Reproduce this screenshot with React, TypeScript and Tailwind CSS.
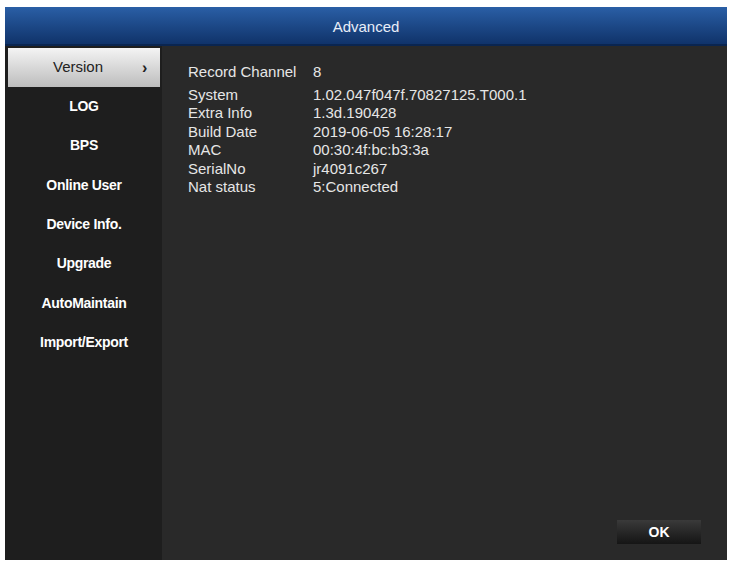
export default function App() {
  const menu = ["LOG", "BPS", "Online User", "Device Info.", "Upgrade", "AutoMaintain", "Import/Export"];
  const rows: [string, string][] = [
    ["System", "1.02.047f047f.70827125.T000.1"],
    ["Extra Info", "1.3d.190428"],
    ["Build Date", "2019-06-05 16:28:17"],
    ["MAC", "00:30:4f:bc:b3:3a"],
    ["SerialNo", "jr4091c267"],
    ["Nat status", "5:Connected"],
  ];
  return (
    <div className="w-[729px] h-[562px] bg-white pt-[7px] pl-[5px] pr-[2px] pb-[2px]" style={{ fontFamily: "'Liberation Sans', Arial, sans-serif" }}>
      <div className="w-full h-full flex flex-col bg-[#292929]">
        <div className="h-[39px] pt-[3px] flex items-center justify-center text-[15px] text-[#e8eef8] bg-gradient-to-b from-[#2a5fa6] to-[#10336a] border-b-2 border-[#0a2550]">Advanced</div>
        <div className="flex-1 flex">
          <div className="w-[157px] bg-[#1e1e1e] pt-[2px] pl-[3px] pr-[2px] flex flex-col">
            <div className="h-[39px] flex items-center bg-gradient-to-b from-[#f4f4f4] to-[#bdbdbd] text-[#222] text-[15px]">
              <span className="flex-1 text-center pl-[6px]">Version</span>
              <span className="w-[18px] font-bold text-[16px] leading-none">›</span>
            </div>
            {menu.map((m) => (
              <div key={m} className="h-[39.3px] flex items-center justify-center text-white text-[14px] font-bold tracking-[-0.3px]">{m}</div>
            ))}
          </div>
          <div className="flex-1 flex flex-col pl-[26px] pt-[14px] text-[15px] text-[#e6e6e6]">
            <div className="flex h-[25px] items-center"><span className="w-[125px]">Record Channel</span><span>8</span></div>
            {rows.map(([k, v]) => (
              <div key={k} className="flex h-[18.5px] items-center leading-none"><span className="w-[125px]">{k}</span><span>{v}</span></div>
            ))}
            <div className="flex-1" />
            <div className="flex justify-end pr-[26px] pb-[16px]">
              <div className="w-[84px] h-[24px] flex items-center justify-center font-bold text-[14px] text-white bg-gradient-to-b from-[#3a3a3a] to-[#151515]">OK</div>
            </div>
          </div>
        </div>
      </div>
    </div>
  );
}
